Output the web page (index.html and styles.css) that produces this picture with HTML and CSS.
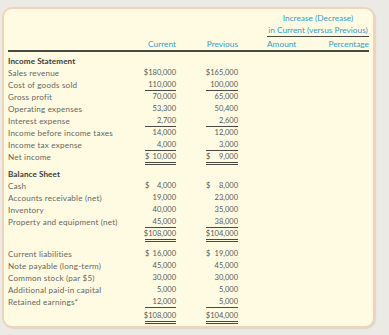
FILE: index.html
```html
<!DOCTYPE html>
<html>
<head>
<meta charset="utf-8">
<link rel="stylesheet" href="styles.css">
</head>
<body>
<div class="card">
  <div class="head">
    <div class="hgroup">
      <div class="ht">Increase (Decrease)</div>
      <div class="ht hline">in Current (versus Previous)</div>
    </div>
    <div class="row hrow">
      <span class="cur">Current</span>
      <span class="prev">Previous</span>
      <span class="pair"><span>Amount</span><span>Percentage</span></span>
    </div>
  </div>

  <div class="row sec"><span class="lab b">Income Statement</span></div>
  <div class="row"><span class="lab">Sales revenue</span><span class="cur num">$180,000</span><span class="prev num">$165,000</span></div>
  <div class="row"><span class="lab">Cost of goods sold</span><span class="cur num u">110,000</span><span class="prev num u">100,000</span></div>
  <div class="row"><span class="lab">Gross profit</span><span class="cur num">70,000</span><span class="prev num">65,000</span></div>
  <div class="row"><span class="lab">Operating expenses</span><span class="cur num">53,300</span><span class="prev num">50,400</span></div>
  <div class="row"><span class="lab">Interest expense</span><span class="cur num u">2,700</span><span class="prev num u">2,600</span></div>
  <div class="row"><span class="lab">Income before income taxes</span><span class="cur num">14,000</span><span class="prev num">12,000</span></div>
  <div class="row"><span class="lab">Income tax expense</span><span class="cur num u">4,000</span><span class="prev num u">3,000</span></div>
  <div class="row"><span class="lab">Net income</span><span class="cur num uu"><span>$</span><span>10,000</span></span><span class="prev num uu"><span>$</span><span>9,000</span></span></div>

  <div class="row sec2"><span class="lab b">Balance Sheet</span></div>
  <div class="row"><span class="lab">Cash</span><span class="cur num"><span>$</span><span>4,000</span></span><span class="prev num"><span>$</span><span>8,000</span></span></div>
  <div class="row"><span class="lab">Accounts receivable (net)</span><span class="cur num">19,000</span><span class="prev num">23,000</span></div>
  <div class="row"><span class="lab">Inventory</span><span class="cur num">40,000</span><span class="prev num">35,000</span></div>
  <div class="row"><span class="lab">Property and equipment (net)</span><span class="cur num u">45,000</span><span class="prev num u">38,000</span></div>
  <div class="row"><span class="lab"></span><span class="cur num uu">$108,000</span><span class="prev num uu">$104,000</span></div>

  <div class="row sec3"><span class="lab">Current liabilities</span><span class="cur num"><span>$</span><span>16,000</span></span><span class="prev num"><span>$</span><span>19,000</span></span></div>
  <div class="row"><span class="lab">Note payable (long-term)</span><span class="cur num">45,000</span><span class="prev num">45,000</span></div>
  <div class="row"><span class="lab">Common stock (par $5)</span><span class="cur num">30,000</span><span class="prev num">30,000</span></div>
  <div class="row"><span class="lab">Additional paid-in capital</span><span class="cur num">5,000</span><span class="prev num">5,000</span></div>
  <div class="row"><span class="lab">Retained earnings*</span><span class="cur num u">12,000</span><span class="prev num u">5,000</span></div>
  <div class="row last"><span class="lab"></span><span class="cur num uu">$108,000</span><span class="prev num uu">$104,000</span></div>
</div>
</body>
</html>
```

FILE: styles.css
```css
* { box-sizing: border-box; }
html, body { margin: 0; padding: 0; }
body {
  background: #ebeae5;
  width: 389px;
  height: 335px;
  padding: 7px 14px 0 2px;
  font-family: Lato, "Open Sans", sans-serif;
  font-size: 8.1px;
  color: #67665e;
}
.card {
  background: #fffbe3;
  border: 2px solid #efd3bb;
  border-radius: 10px;
  height: 321px;
  padding: 3px 4px 0 4px;
  box-shadow: 1px 1px 1px rgba(0,0,0,0.08);
}
.head {
  border-bottom: 2px solid #4a4a42;
  font-size: 8.3px;
}
.hgroup {
  margin-left: 259px;
  text-align: center;
  color: #2f9fc8;
}
.ht { line-height: 12px; height: 12px; white-space: nowrap; }
.hline { border-bottom: 1.5px solid #4a4a42; height: 13px; }
.row {
  display: grid;
  grid-template-columns: 137px 31px 30px 32px 29px 1fr;
  align-items: start;
  line-height: 12px;
  min-height: 12px;
}
.hrow { color: #2f9fc8; margin-top: 1px; }
.lab { grid-column: 1; white-space: nowrap; letter-spacing: 0.2px; }
.cur { grid-column: 2; }
.prev { grid-column: 4; }
.hrow .cur, .hrow .prev { text-align: right; white-space: nowrap; }
.pair { grid-column: 6; display: flex; justify-content: space-between; }
.b { font-weight: 700; color: #3a3934; letter-spacing: 0.1px; }
.num {
  display: flex;
  justify-content: flex-end;
  white-space: nowrap;
  font-size: 7.5px;
  color: #5a5953;
}
.num > span:first-child:not(:last-child) { margin-right: auto; }
.u {
  margin-top: 1px;
  line-height: 10px;
  border-bottom: 1px solid #4a4a42;
}
.uu {
  margin-top: 1px;
  line-height: 10px;
  border-bottom: 3px double #4a4a42;
}
.sec { margin-top: 3px; }
.sec2 { margin-top: 3px; }
.sec3 { margin-top: 6px; }
.last { margin-top: 2px; }
```
